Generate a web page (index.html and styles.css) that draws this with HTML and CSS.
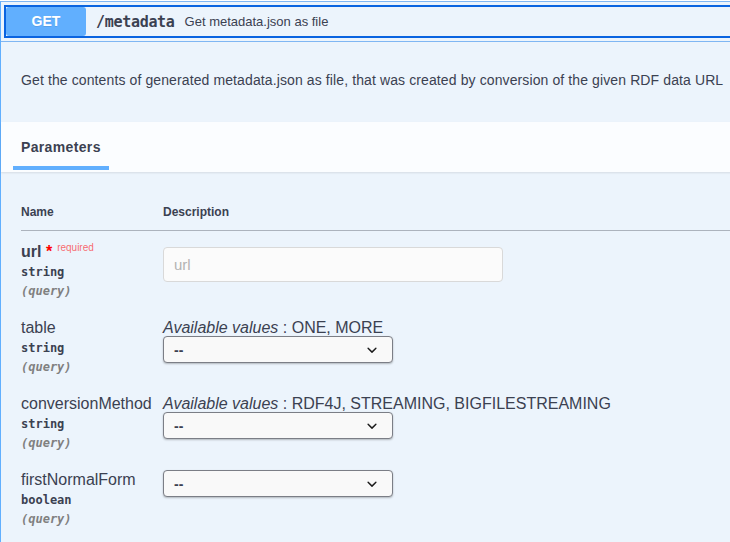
FILE: index.html
```html
<!DOCTYPE html>
<html lang="en">
<head>
<meta charset="utf-8">
<title>GET /metadata</title>
<link rel="stylesheet" href="styles.css">
</head>
<body>
<div class="opblock">
  <div class="summary">
    <div class="summary-control">
      <span class="method">GET</span>
      <span class="path">/metadata</span>
      <span class="summary-desc">Get metadata.json as file</span>
    </div>
  </div>
  <div class="description">
    <p>Get the contents of generated metadata.json as file, that was created by conversion of the given RDF data URL</p>
  </div>
  <div class="section-header">
    <div class="tab">Parameters</div>
  </div>
  <div class="params">
    <table class="param-table">
      <thead>
        <tr><th class="col-name">Name</th><th>Description</th></tr>
      </thead>
      <tbody>
        <tr>
          <td class="col-name">
            <div class="p-name required">url<span class="star">&nbsp;*</span><span class="req">required</span></div>
            <div class="p-type">string</div>
            <div class="p-in">(query)</div>
          </td>
          <td class="col-desc">
            <input class="p-input" type="text" placeholder="url">
          </td>
        </tr>
        <tr>
          <td class="col-name">
            <div class="p-name">table</div>
            <div class="p-type">string</div>
            <div class="p-in">(query)</div>
          </td>
          <td class="col-desc">
            <div class="avail"><i>Available values</i> : ONE, MORE</div>
            <div class="select"><span>--</span><svg class="chev" viewBox="0 0 20 20" width="20" height="20"><path d="M13.418 7.859a.695.695 0 01.978 0 .68.68 0 010 .969l-3.908 3.83a.697.697 0 01-.979 0l-3.908-3.83a.68.68 0 010-.969.695.695 0 01.978 0L10 11l3.418-3.141z"/></svg></div>
          </td>
        </tr>
        <tr>
          <td class="col-name">
            <div class="p-name">conversionMethod</div>
            <div class="p-type">string</div>
            <div class="p-in">(query)</div>
          </td>
          <td class="col-desc">
            <div class="avail"><i>Available values</i> : RDF4J, STREAMING, BIGFILESTREAMING</div>
            <div class="select"><span>--</span><svg class="chev" viewBox="0 0 20 20" width="20" height="20"><path d="M13.418 7.859a.695.695 0 01.978 0 .68.68 0 010 .969l-3.908 3.83a.697.697 0 01-.979 0l-3.908-3.83a.68.68 0 010-.969.695.695 0 01.978 0L10 11l3.418-3.141z"/></svg></div>
          </td>
        </tr>
        <tr>
          <td class="col-name">
            <div class="p-name">firstNormalForm</div>
            <div class="p-type">boolean</div>
            <div class="p-in">(query)</div>
          </td>
          <td class="col-desc">
            <div class="select"><span>--</span><svg class="chev" viewBox="0 0 20 20" width="20" height="20"><path d="M13.418 7.859a.695.695 0 01.978 0 .68.68 0 010 .969l-3.908 3.83a.697.697 0 01-.979 0l-3.908-3.83a.68.68 0 010-.969.695.695 0 01.978 0L10 11l3.418-3.141z"/></svg></div>
          </td>
        </tr>
      </tbody>
    </table>
  </div>
</div>
</body>
</html>
```

FILE: styles.css
```css
html, body {
  margin: 0;
  background: #ffffff;
}
body {
  padding-top: 1px;
  overflow: hidden;
  font-family: "Liberation Sans", Arial, sans-serif;
  color: #3b4151;
}
.opblock {
  width: 820px;
  background: #ecf4fc;
  border-top: 1px solid #7fb6f3;
  border-left: 1px solid #61affe;
}
.summary {
  padding: 5px;
  border-bottom: 1px solid #7fb6f3;
}
.summary-control {
  display: flex;
  align-items: center;
  height: 29px;
  outline: 2px solid #0a64e0;
}
.method {
  width: 80px;
  height: 29px;
  line-height: 29px;
  text-align: center;
  background: #61affe;
  color: #ffffff;
  font-weight: 700;
  font-size: 14px;
  border-radius: 3px;
  text-shadow: 0 1px 0 rgba(0,0,0,.1);
}
.path {
  padding: 0 10px;
  font-family: "DejaVu Sans Mono", monospace;
  font-weight: 700;
  font-size: 15px;
  letter-spacing: -0.3px;
  color: #3b4151;
}
.summary-desc {
  font-size: 13px;
  color: #3b4151;
}
.description {
  padding: 27px 20px 31px;
}
.description p {
  margin: 0;
  font-size: 14px;
  line-height: 22px;
  letter-spacing: 0.11px;
  white-space: nowrap;
}
.section-header {
  display: flex;
  align-items: flex-end;
  padding: 16px 12px 2px;
  background: rgba(255,255,255,.8);
  box-shadow: 0 1px 2px rgba(0,0,0,.1);
}
.tab {
  padding: 1px 8px 10px;
  border-bottom: 4px solid #61affe;
  font-size: 14px;
  font-weight: 700;
  line-height: 17px;
  letter-spacing: 0.35px;
}
.params {
  padding: 20px 20px;
}
.param-table {
  width: 100%;
  border-collapse: collapse;
}
.param-table th {
  text-align: left;
  font-size: 12px;
  font-weight: 700;
  line-height: 14px;
  padding: 13px 0 11px;
  border-bottom: 1px solid rgba(59,65,81,.2);
}
.col-name {
  width: 142px;
}
.param-table td {
  padding: 10px 0;
  vertical-align: top;
}
.p-name {
  padding-top: 1px;
  font-size: 16px;
  line-height: normal;
  white-space: nowrap;
}
.p-name.required {
  font-weight: 700;
}
.star {
  color: #ff0000;
}
.req {
  font-size: 10px;
  font-weight: 400;
  padding: 0 5px;
  vertical-align: 6px;
  color: rgba(255,0,0,.6);
}
.p-type {
  padding: 4px 0 5px;
  font-family: "DejaVu Sans Mono", monospace;
  font-weight: 700;
  font-size: 12px;
  line-height: 14px;
}
.p-in {
  font-family: "DejaVu Sans Mono", monospace;
  font-style: italic;
  font-weight: 700;
  font-size: 12px;
  line-height: 14px;
  color: #808080;
}
.p-input {
  display: block;
  box-sizing: border-box;
  margin: 6px 0 0;
  width: 340px;
  height: 35px;
  padding: 0 10px;
  border: 1px solid #d9d9d9;
  border-radius: 4px;
  background: #fbfbfb;
  font-family: "Liberation Sans", Arial, sans-serif;
  font-size: 15px;
  color: #3b4151;
}
.p-input::placeholder {
  color: #b3b3b3;
}
.avail {
  padding-top: 1px;
  margin-bottom: -1px;
  font-size: 16px;
  line-height: normal;
  white-space: nowrap;
}
.select {
  box-sizing: border-box;
  width: 230px;
  height: 27px;
  display: flex;
  align-items: center;
  justify-content: space-between;
  padding: 0 10px;
  border: 1px solid #7b7e86;
  border-radius: 4px;
  background: #f9f9f9;
  box-shadow: 0 1px 2px rgba(0,0,0,.25);
  font-size: 14px;
  font-weight: 700;
  color: #3b4151;
}
.chev {
  fill: #1b1b1b;
}
```
